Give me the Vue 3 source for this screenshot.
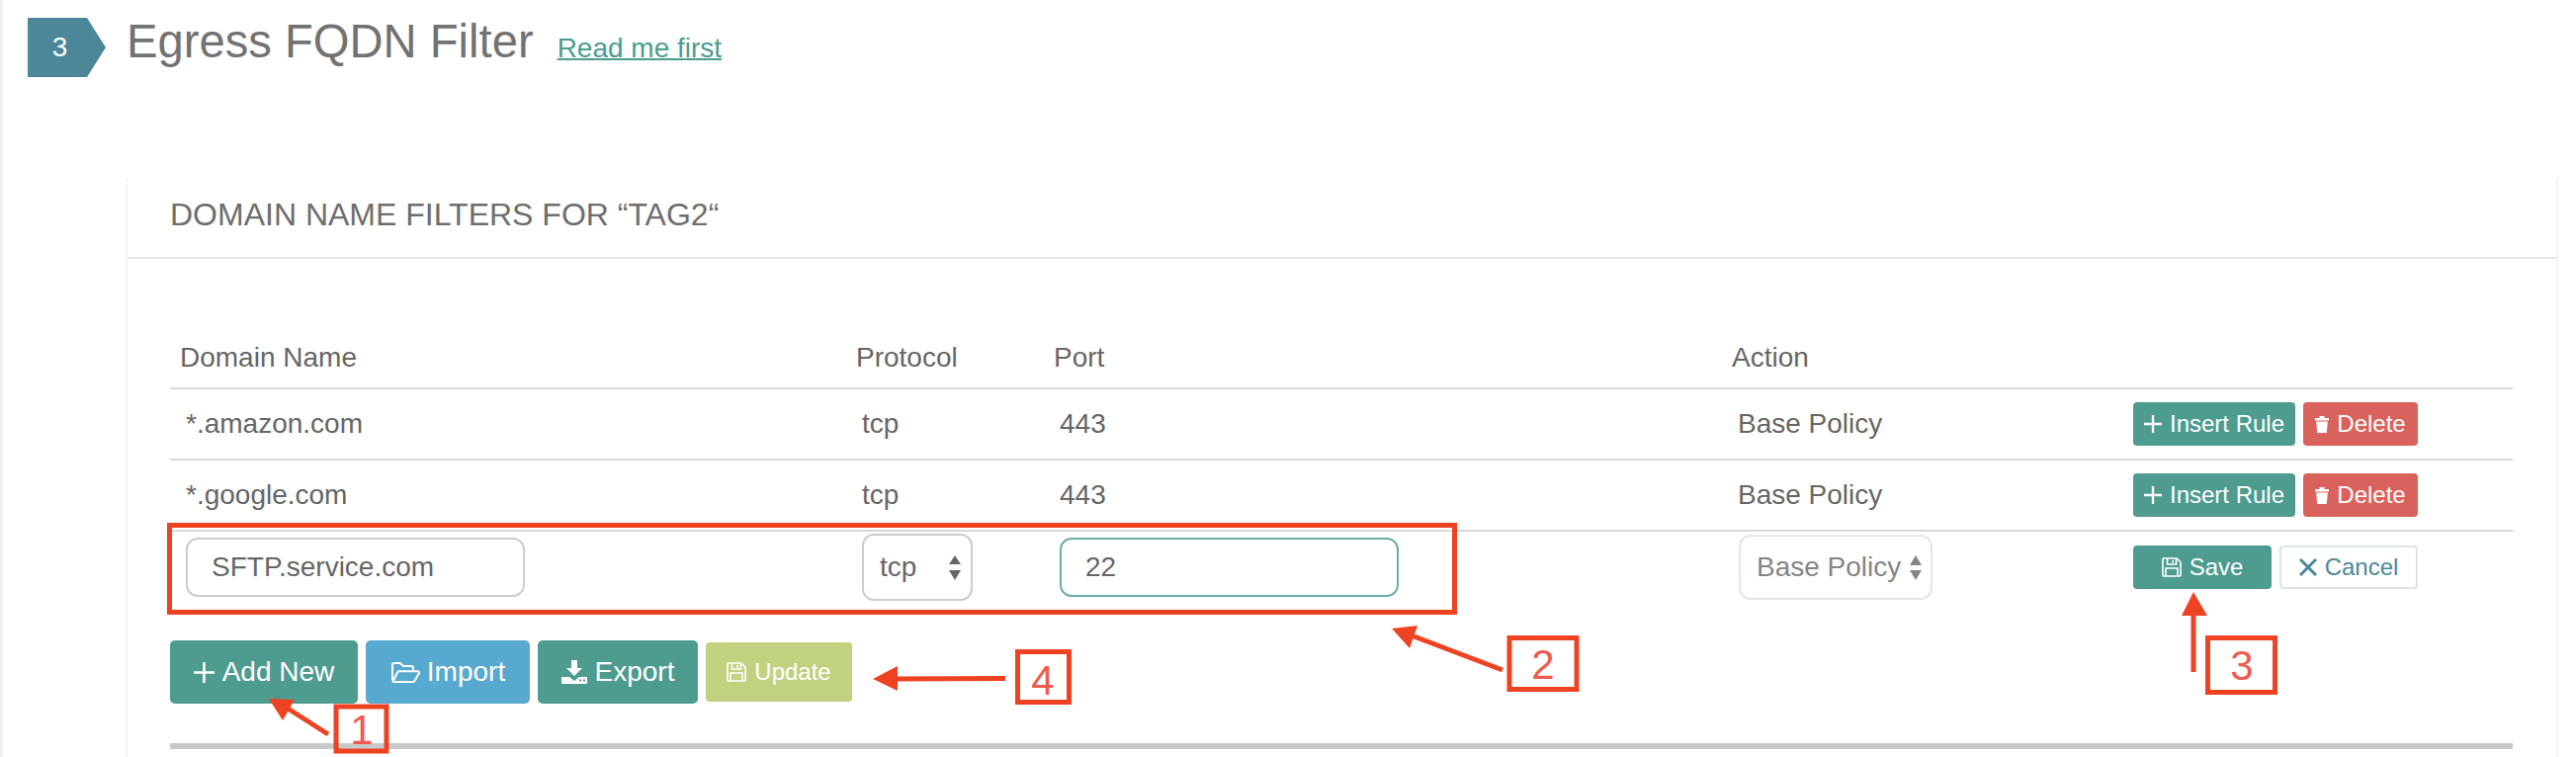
<script setup>
const rules = [
  { domain: '*.amazon.com', protocol: 'tcp', port: '443', action: 'Base Policy' },
  { domain: '*.google.com', protocol: 'tcp', port: '443', action: 'Base Policy' },
]
</script>

<template>
  <div class="page">
    <div class="heading">
      <div class="step">3</div>
      <div class="heading-text">
        <h1 class="title">Egress FQDN Filter</h1>
        <a class="read-me" href="#">Read me first</a>
      </div>
    </div>

    <section class="card">
      <h2 class="card-title">DOMAIN NAME FILTERS FOR “TAG2“</h2>

      <div class="card-body">
        <div class="grid head">
          <div>Domain Name</div>
          <div>Protocol</div>
          <div>Port</div>
          <div>Action</div>
          <div></div>
        </div>

        <div v-for="rule in rules" :key="rule.domain" class="grid row">
          <div>{{ rule.domain }}</div>
          <div>{{ rule.protocol }}</div>
          <div>{{ rule.port }}</div>
          <div>{{ rule.action }}</div>
          <div class="actions">
            <button class="btn small insert">
              <svg class="i-plus" viewBox="0 0 20 20"><path d="M10 0v20M0 10h20" /></svg>
              Insert Rule
            </button>
            <button class="btn small delete">
              <svg class="i-trash" viewBox="0 0 14 17">
                <path d="M4.5 0h5v2h4.5v2.4H0V2h4.5zM1.2 5.6h11.6l-1 11.4H2.2z" />
              </svg>
              Delete
            </button>
          </div>
        </div>

        <div class="grid edit-row">
          <div class="cell-domain"><input class="field" value="SFTP.service.com" /></div>
          <div>
            <div class="select proto">
              <span>tcp</span>
              <svg class="updown" viewBox="0 0 12 25"><path d="M6 0l6 9H0zM0 15h12l-6 10z" /></svg>
            </div>
          </div>
          <div class="cell-port"><input class="field focused" value="22" /></div>
          <div>
            <div class="select policy">
              <span>Base Policy</span>
              <svg class="updown" viewBox="0 0 12 25"><path d="M6 0l6 10H0zM0 15h12l-6 10z" /></svg>
            </div>
          </div>
          <div class="actions edit-actions">
            <button class="btn small save">
              <svg class="i-save" viewBox="0 0 20 20">
                <path d="M1 2a1 1 0 0 1 1-1h13l4 4v13a1 1 0 0 1-1 1H2a1 1 0 0 1-1-1zM5.500 1v6h9V1M11 3v2.500M4 19v-8h12v8" />
              </svg>
              Save
            </button>
            <button class="btn small cancel">
              <svg class="i-x" viewBox="0 0 18 18"><path d="M1 1l16 16M17 1L1 17" /></svg>
              Cancel
            </button>
          </div>
        </div>

        <div class="toolbar">
          <button class="btn add">
            <svg class="i-plus big" viewBox="0 0 20 20"><path d="M10 0v20M0 10h20" /></svg>
            Add New
          </button>
          <button class="btn import">
            <svg class="i-folder" viewBox="0 0 30 21">
              <path d="M2 18V3a2 2 0 0 1 2-2h6l3 3h8a2 2 0 0 1 2 2v3M2.500 19.500L7 10.500a2 2 0 0 1 2-1.300h18.500a1.500 1.500 0 0 1 1.300 2.300l-4 7a2 2 0 0 1-2 1.500H3.500a1 1 0 0 1-1-.5z" />
            </svg>
            Import
          </button>
          <button class="btn export">
            <svg class="i-export" viewBox="0 0 26 24">
              <path fill-rule="evenodd" d="M10 0h6v8h5l-8 8-8-8h5zM0 17h8l5 4 5-4h8v5.500a1.500 1.500 0 0 1-1.500 1.500h-23A1.500 1.500 0 0 1 0 22.500zM18 19.500v2h2v-2zM22 19.500v2h2v-2z" />
            </svg>
            Export
          </button>
          <button class="btn small update">
            <svg class="i-save" viewBox="0 0 20 20">
              <path d="M1 2a1 1 0 0 1 1-1h13l4 4v13a1 1 0 0 1-1 1H2a1 1 0 0 1-1-1zM5.500 1v6h9V1M11 3v2.500M4 19v-8h12v8" />
            </svg>
            Update
          </button>
        </div>

        <div class="rule"></div>
      </div>
    </section>

    <!-- red callouts drawn on top of the screenshot -->
    <svg class="callouts" viewBox="0 0 2606 766">
      <g class="boxes">
        <rect x="171.500" y="531.500" width="1300" height="88" />
        <rect x="340" y="715" width="51" height="45" />
        <rect x="1527" y="645.500" width="68" height="52" />
        <rect x="2233.500" y="645.500" width="68" height="55" />
        <rect x="1029.500" y="659.500" width="52" height="51" />
      </g>
      <g class="lines">
        <path d="M332 743L285 713" />
        <path d="M1520 678L1420 640" />
        <path d="M2219 680V615" />
        <path d="M1017 686.500L900 687" />
      </g>
      <g class="heads">
        <path d="M272 707l26 1-12 21z" />
        <path d="M1408 636l26-3-8 23z" />
        <path d="M2219 599l14 24h-26z" />
        <path d="M883 687l25-13v25z" />
      </g>
      <g class="digits">
        <text x="366" y="753">1</text>
        <text x="1561" y="687">2</text>
        <text x="2268" y="688">3</text>
        <text x="1055" y="703">4</text>
      </g>
    </svg>
  </div>
</template>

<style scoped>
.page {
  position: relative;
  width: 2606px;
  height: 766px;
  overflow: hidden;
  background: #fff;
  box-shadow: inset 3px 0 0 #f0f0f0;
  font-family: "Liberation Sans", Arial, sans-serif;
  color: #666;
}

.heading {
  display: flex;
  align-items: flex-start;
  padding: 18px 0 0 28px;
  height: 180px;
  box-sizing: border-box;
}

.heading-text {
  display: flex;
  align-items: baseline;
}

.step {
  width: 79px;
  height: 60px;
  background: #4b8798;
  clip-path: polygon(0 0, 60px 0, 100% 50%, 60px 100%, 0 100%);
  color: #fff;
  font-size: 28px;
  line-height: 60px;
  text-align: center;
  padding-right: 14px;
  box-sizing: border-box;
  margin-right: 21px;
}

.title {
  margin: 0;
  font-size: 47.200px;
  font-weight: 400;
  line-height: 48px;
  color: #727272;
}

.read-me {
  margin-left: 24px;
  font-size: 28px;
  color: #4a9d8e;
  text-decoration-thickness: 2px;
}

.card {
  margin-left: 127px;
  width: 2461px;
  box-sizing: border-box;
  height: 586px;
  border-left: 2px solid #f4f4f4;
  border-right: 2px solid #f4f4f4;
}

.card-title {
  margin: 0;
  padding-left: 43px;
  height: 82px;
  box-sizing: border-box;
  border-bottom: 2px solid #e6e6e6;
  font-size: 32px;
  font-weight: 400;
  line-height: 74px;
  color: #6e6e6e;
}

.card-body {
  padding: 0 44px 0 43px;
}

.grid {
  display: grid;
  grid-template-columns: 684px 200px 686px 400px 400px;
  font-size: 28px;
  line-height: 32px;
}

.head {
  height: 132px;
  align-items: end;
  padding-bottom: 14px;
  box-sizing: border-box;
  border-bottom: 2px solid #d8d8d8;
}

.head > div {
  padding-left: 10px;
}

.row {
  height: 72px;
  box-sizing: border-box;
  align-items: center;
  border-bottom: 2px solid #d8d8d8;
}

.row > div {
  padding-left: 16px;
}

.actions {
  display: flex;
  gap: 8px;
}

.edit-row {
  height: 110px;
  align-items: start;
}

.cell-domain,
.cell-port {
  padding: 6px 0 0 16px;
}

.field {
  display: block;
  width: 343px;
  height: 60px;
  box-sizing: border-box;
  border: 2px solid #ccc;
  border-radius: 12px;
  padding: 0 24px;
  font: inherit;
  font-size: 28px;
  color: #666;
  background: #fff;
  outline: none;
}

.field.focused {
  border-color: #6aafa6;
}

.select {
  display: flex;
  align-items: center;
  justify-content: space-between;
  box-sizing: border-box;
  border: 2px solid #ccc;
  border-radius: 12px;
  background: #fff;
}

.select.proto {
  margin: 2px 0 0 16px;
  width: 112px;
  height: 68px;
  padding: 0 10px 0 16px;
}

.select.policy {
  margin: 3px 0 0 17px;
  width: 196px;
  height: 66px;
  padding: 0 9px 0 16px;
  border-color: #e6e6e6;
  color: #858585;
}

.updown {
  width: 12px;
  height: 25px;
  fill: #666;
}

.policy .updown {
  fill: #858585;
}

.edit-actions {
  padding: 14px 0 0 16px;
}

.btn {
  display: inline-flex;
  align-items: center;
  justify-content: center;
  gap: 8px;
  height: 64px;
  padding: 0 24px;
  box-sizing: border-box;
  border: 0;
  border-radius: 5px;
  font-family: inherit;
  font-size: 28px;
  color: #fff;
  background: #4e9c8f;
}

.btn.small {
  height: 44px;
  font-size: 24px;
  border-radius: 4px;
}

.btn svg {
  flex: none;
}

.insert {
  width: 164px;
  padding: 0;
}

.delete {
  width: 116px;
  padding: 0;
  background: #d9625c;
}

.save {
  width: 140px;
  padding: 0;
}

.cancel {
  width: 140px;
  padding: 0;
  background: #fff;
  border: 2px solid #dfe4e8;
  color: #4b8798;
}

.toolbar {
  display: flex;
  align-items: center;
  gap: 8px;
  margin-bottom: 40px;
}

.btn.add {
  width: 190px;
  padding: 0;
}

.btn.import {
  width: 166px;
  padding: 0;
  gap: 7px;
  background: #57a9cf;
}

.btn.export {
  width: 162px;
  padding: 0;
}

.btn.update {
  width: 148px;
  height: 60px;
  padding: 0;
  background: #c0d27f;
}

.i-plus {
  width: 18px;
  height: 18px;
  fill: none;
  stroke: currentColor;
  stroke-width: 2.600;
}

.i-plus.big {
  width: 21px;
  height: 21px;
  stroke-width: 2.400;
}

.i-trash {
  width: 14px;
  height: 17px;
  fill: currentColor;
}

.i-save {
  width: 20px;
  height: 20px;
  fill: none;
  stroke: currentColor;
  stroke-width: 1.600;
}

.i-x {
  width: 18px;
  height: 18px;
  fill: none;
  stroke: currentColor;
  stroke-width: 3;
}

.i-folder {
  width: 30px;
  height: 21px;
  fill: none;
  stroke: currentColor;
  stroke-width: 2;
}

.i-export {
  width: 26px;
  height: 24px;
  fill: currentColor;
}

.rule {
  height: 6px;
  background: #c8c8c8;
}

.callouts {
  position: absolute;
  left: 0;
  top: 0;
  width: 2606px;
  height: 766px;
  pointer-events: none;
}

.boxes rect {
  fill: none;
  stroke: #ee4323;
  stroke-width: 5;
}

.lines path {
  fill: none;
  stroke: #ee4323;
  stroke-width: 5;
}

.heads path {
  fill: #ee4323;
}

.digits text {
  fill: #ee5a50;
  font-family: "Liberation Sans", Arial, sans-serif;
  font-size: 42px;
  text-anchor: middle;
}
</style>
